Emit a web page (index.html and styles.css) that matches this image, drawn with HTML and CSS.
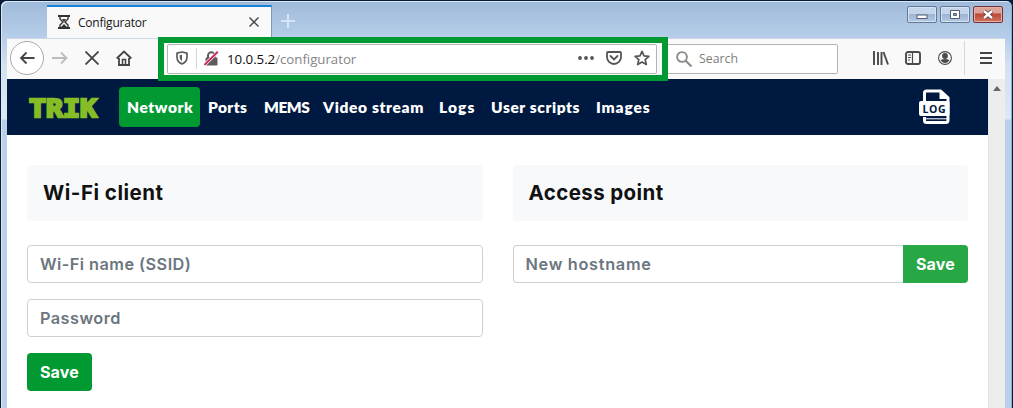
FILE: index.html
```html
<!DOCTYPE html>
<html lang="en">
<head>
<meta charset="utf-8">
<title>Configurator</title>
<link rel="stylesheet" href="styles.css">
</head>
<body>
<div class="window">
  <header class="titlebar">
    <div class="tab">
      <svg class="tab-icon" width="12" height="14" viewBox="0 0 12 14"><path d="M0 1h12M0 13h12" stroke="#333" stroke-width="2"/><path d="M2 2v2l3 3-3 3v2M10 2v2L7 7l3 3v2" fill="none" stroke="#333" stroke-width="1.4"/><path d="M4 4h4L6 7zM3 12l3-3 3 3z" fill="#333"/></svg>
      <span class="tab-title">Configurator</span>
      <svg class="tab-close" width="10" height="10" viewBox="0 0 10 10"><path d="M.5 .5l9 9M9.500 .5l-9 9" stroke="#444" stroke-width="1.4"/></svg>
    </div>
    <svg class="new-tab" width="14" height="14" viewBox="0 0 14 14"><path d="M7 0v14M0 7h14" stroke="#e6eef8" stroke-width="1.6"/></svg>
    <div class="win-buttons">
      <span class="win-button"><svg width="30" height="17" viewBox="0 0 30 17"><rect x="10" y="9" width="10" height="3.5" fill="#fff" stroke="#555d70"/></svg></span>
      <span class="win-button"><svg width="30" height="17" viewBox="0 0 30 17"><path d="M10.500 4.500h9v8h-9z" fill="#fff" stroke="#555d70"/><path d="M13.500 7.500h3v2h-3z" fill="#8ea9cd" stroke="#555d70"/></svg></span>
      <span class="win-button win-close"><svg width="30" height="17" viewBox="0 0 30 17"><path d="M11 5l8 7M19 5l-8 7" stroke="#5a3540" stroke-width="4"/><path d="M11 5l8 7M19 5l-8 7" stroke="#fff" stroke-width="2.400"/></svg></span>
    </div>
  </header>

  <div class="toolbar">
    <div class="nav-icons">
      <span class="back"><svg width="16" height="14" viewBox="0 0 16 14"><path d="M15.500 7H2M7.500 1.500L2 7l5.500 5.500" fill="none" stroke="#444" stroke-width="1.8"/></svg></span>
      <svg class="forward" width="16" height="14" viewBox="0 0 16 14"><path d="M0 7h14M9 1.500L14.500 7 9 12.500" fill="none" stroke="#bbb" stroke-width="1.8"/></svg>
      <svg class="stop" width="14" height="14" viewBox="0 0 14 14"><path d="M.5 .5l13 13M13.500 .5l-13 13" stroke="#444" stroke-width="1.8"/></svg>
      <svg class="home" width="16" height="16" viewBox="0 0 16 16"><path d="M.7 8.500L8 1.500l7.300 7" fill="none" stroke="#444" stroke-width="1.8"/><path d="M3 8v7h10V8" fill="none" stroke="#444" stroke-width="1.800"/><path d="M6.500 15V9.500h3V15" fill="none" stroke="#444" stroke-width="1.500"/></svg>
    </div>
    <div class="highlight">
      <div class="urlbar">
        <svg class="shield" width="12" height="14" viewBox="0 0 12 14"><path d="M6 1L11 2.200V6c0 3.300-2 5.700-5 7-3-1.300-5-3.700-5-7V2.200z" fill="none" stroke="#5c5c5c" stroke-width="1.700" stroke-linejoin="round"/><path d="M6 3.700v6.500C4.300 8.900 3.600 7.500 3.600 6V4.300z" fill="#5c5c5c"/></svg>
        <span class="separator"></span>
        <svg class="lock" width="15" height="15" viewBox="0 0 15 15"><path d="M4 7V4.500a3.300 3.300 0 0 1 6.600 0V7" fill="none" stroke="#5c5c5c" stroke-width="2"/><rect x="1.500" y="6.500" width="12" height="8" rx="1" fill="#5c5c5c"/><path d="M.5 13.800L13.800 .8" stroke="#fff" stroke-width="3.200"/><path d="M.5 13.800L13.800 .8" stroke="#cc2956" stroke-width="2"/></svg>
        <span class="address"><span class="host">10.0.5.2</span>/configurator</span>
        <svg class="dots" width="16" height="4" viewBox="0 0 16 4"><g fill="#555"><circle cx="2" cy="2" r="1.900"/><circle cx="8" cy="2" r="1.900"/><circle cx="14" cy="2" r="1.900"/></g></svg>
        <svg class="pocket" width="16" height="14" viewBox="0 0 16 14"><path d="M2 1h12q1 0 1 1v4a7 7 0 0 1-14 0V2q0-1 1-1z" fill="none" stroke="#555" stroke-width="1.800"/><path d="M4.500 5L8 8.500 11.500 5" fill="none" stroke="#555" stroke-width="1.800" stroke-linecap="round"/></svg>
        <svg class="star" width="16" height="16" viewBox="0 0 16 16"><path d="M8 1.300l2 4.500 4.900.5-3.700 3.300 1.100 4.900L8 12l-4.300 2.500 1.100-4.900L1.100 6.300 6 5.800z" fill="none" stroke="#555" stroke-width="1.700" stroke-linejoin="round"/></svg>
      </div>
    </div>
    <div class="search">
      <svg width="16" height="16" viewBox="0 0 16 16"><circle cx="6" cy="6" r="4.900" fill="none" stroke="#8c8c8c" stroke-width="1.900"/><path d="M9.500 9.500L15.500 15.500" stroke="#8c8c8c" stroke-width="2.200"/></svg>
      <span>Search</span>
    </div>
    <div class="tools">
      <svg width="16" height="14" viewBox="0 0 16 14"><path d="M1 0v14M5 1v13M8.500 1v13M10.500 1l4.500 12.500" stroke="#4a4a4a" stroke-width="1.900" fill="none"/></svg>
      <svg width="16" height="14" viewBox="0 0 16 14"><rect x="1" y="1" width="14" height="12" rx="2" fill="none" stroke="#4a4a4a" stroke-width="1.900"/><path d="M7.500 1v12M3 4h3M3 6.500h3M3 9h2" stroke="#4a4a4a" stroke-width="1.200"/></svg>
      <svg class="account" width="14" height="14" viewBox="0 0 14 14"><circle cx="7" cy="7" r="6.400" fill="none" stroke="#4a4a4a" stroke-width="1.100"/><circle cx="7" cy="5" r="2.900" fill="#4a4a4a"/><path d="M2.500 9q4.500-2 9 0Q10 12 7 12T2.500 9z" fill="#4a4a4a"/></svg>
      <span class="tool-divider"></span>
      <svg class="menu" width="12" height="12" viewBox="0 0 12 12"><path d="M0 1h12M0 6h12M0 11h12" stroke="#444" stroke-width="2"/></svg>
    </div>
  </div>

  <div class="viewport">
    <div class="page">
      <nav class="navbar">
        <svg class="brand" width="72" height="36" viewBox="0 0 72 36"><text class="brand-text" x="2" y="27.500" textLength="68" lengthAdjust="spacingAndGlyphs">TRIK</text></svg>
        <div class="links">
          <a class="link active network">Network</a>
          <a class="link ports">Ports</a>
          <a class="link mems">MEMS</a>
          <a class="link video">Video stream</a>
          <a class="link logs">Logs</a>
          <a class="link scripts">User scripts</a>
          <a class="link images">Images</a>
        </div>
        <svg class="log-icon" width="32" height="36" viewBox="0 0 32 36"><path d="M5.500 12V4q0-2 2-2h14l7.500 7v22q0 2.500-2 2.500H7.500q-2 0-2-2V28" fill="none" stroke="#fff" stroke-width="3"/><path d="M20.500 2v8h9V8l-6-6z" fill="#fff"/><rect x="0" y="12" width="30.500" height="15" rx="2" fill="#fff"/><path d="M6 29.800h22" stroke="#fff" stroke-width="1"/><text class="log-text" x="3.500" y="23.800" textLength="23" lengthAdjust="spacing">LOG</text></svg>
      </nav>
      <main class="columns">
        <section class="column">
          <h2 class="heading wifi-heading">Wi-Fi client</h2>
          <div class="field ssid">Wi-Fi name (SSID)</div>
          <div class="field">Password</div>
          <button class="save">Save</button>
        </section>
        <section class="column">
          <h2 class="heading access-heading">Access point</h2>
          <div class="group">
            <div class="field host-field">New hostname</div>
            <button class="save save-host">Save</button>
          </div>
        </section>
      </main>
    </div>
    <div class="scrollbar"><svg width="8" height="5" viewBox="0 0 8 5"><path d="M0 5l4-5 4 5z" fill="#666"/></svg></div>
  </div>
</div>
</body>
</html>
```
FILE: styles.css
```css
* { box-sizing: border-box; }
body { margin: 0; height: 408px; overflow: hidden; background: #061c38; font-family: "Open Sans", sans-serif; }
svg { display: block; flex: none; }
.window { width: 1011px; height: 407px; margin: 1px 0 0 1px; padding: 0 7px 0 6px; border-radius: 6px 6px 0 0; background: linear-gradient(#9fbad9 0, #b6cee9 37px, #d4e1ef 65px, #dce8f3 118px, #b9d0e8 119px, #b9d0e8 100%); box-shadow: inset 1px 1px 0 #dce9f5, inset -1px 0 0 #7bb4dc; }
.titlebar { height: 37px; display: flex; align-items: flex-start; padding-left: 40px; }
.tab { width: 225px; height: 33px; margin-top: 4px; padding: 0 12px 1px 11px; display: flex; align-items: center; border-top: 2px solid #1682dd; border-right: 1px solid #8199b5; background: #f9f9fa; }
.tab-title { margin-left: 8px; flex: 1; font: 12px "Open Sans", sans-serif; letter-spacing: -.22px; color: #151515; }
.new-tab { margin: 13px 0 0 9px; }
.win-buttons { margin: 5px 2px 0 auto; display: flex; gap: 3px; }
.win-button { width: 30px; height: 17px; border: 1px solid #64789a; border-radius: 2px; background: linear-gradient(#c5d5e9 0 45%, #9bb3d2 46%, #b4cae4); box-shadow: inset 0 0 0 1px #d5e2f1; }
.win-button svg { margin: -1px; }
.win-close { border-color: #70333c; background: linear-gradient(#dfa299 0 40%, #bd4638 46%, #d2765d); box-shadow: inset 0 0 0 1px #e5b1a6; }
.toolbar { height: 41px; display: flex; align-items: center; background: #f9f9fa; border-top: 1px solid #cfd9e5; }
.nav-icons { width: 151px; padding: 0 0 2px 3px; display: flex; align-items: center; }
.back { width: 34px; height: 34px; display: flex; align-items: center; justify-content: center; border: 1px solid #aaa; border-radius: 50%; background: #fff; }
.forward { margin-left: 8px; }
.stop { margin-left: 17px; }
.home { margin-left: 17px; }
.highlight { width: 510px; height: 44px; flex: none; position: relative; z-index: 1; padding: 1px 5px 1px 3px; border: 6px solid #009932; background: #f9f9fa; }
.urlbar { height: 30px; display: flex; align-items: center; padding: 0 6px 2px 8px; border: 1px solid #b4b4b4; border-radius: 2px; background: #fff; }
.separator { width: 1px; height: 21px; margin-left: 8px; background: #d5d5d5; }
.lock { margin-left: 7px; }
.address { flex: 1; margin: 1px 0 0 8px; font-size: 13.300px; letter-spacing: -.04px; color: #858585; }
.host { color: #0c0c0d; }
.pocket { margin-left: 12px; }
.star { margin-left: 12px; }
.search { width: 170px; height: 30px; display: flex; align-items: center; gap: 7px; padding: 0 0 1px 8px; border: 1px solid #b4b4b4; border-left: 0; border-radius: 0 2px 2px 0; background: #fff; color: #7c7c7c; font-size: 12.300px; }
.tools { margin: 0 13px 2px auto; display: flex; align-items: center; gap: 16px; }
.account { margin-left: 1px; }
.tool-divider { width: 1px; height: 34px; margin-left: -4px; background: #d7d7d9; }
.menu { margin-left: -1px; }
.viewport { display: flex; height: 329px; }
.page { width: 981px; background: #fff; }
.scrollbar { flex: 1; display: flex; justify-content: center; padding-top: 7px; background: #ededee; border-left: 1px solid #e2e2e2; }
.navbar { height: 56px; display: flex; align-items: center; padding: 0 37px 0 20px; background: #001941; }
.brand-text { font: bold 25px "DejaVu Sans Mono", monospace; fill: #86bc25; stroke: #86bc25; stroke-width: 2.400px; }
.links { display: flex; height: 40px; margin-left: 20px; }
.link { height: 40px; padding: 0 8px; white-space: nowrap; border-radius: 4px; color: #fff; font: 800 15.500px/41px Lato, sans-serif; }
.active { background: #009932; }
.network { width: 81px; letter-spacing: .6px; }
.ports { width: 56px; letter-spacing: .4px; }
.mems { width: 59px; letter-spacing: -.5px; }
.video { width: 116px; letter-spacing: .65px; }
.logs { width: 52px; letter-spacing: 1.1px; }
.scripts { width: 105px; letter-spacing: .6px; }
.images { width: 70px; letter-spacing: .85px; }
.log-icon { margin-left: auto; }
.log-text { font: bold 10.500px "Open Sans", sans-serif; fill: #001941; }
.columns { display: flex; gap: 30px; padding: 30px 20px 0 20px; }
.column { flex: 1; }
.heading { height: 56px; margin: 0 0 24px; padding-left: 16px; border-radius: 3px; background: #f8f9fb; color: #111; font: 650 20.500px/56px Inter, sans-serif; }
.wifi-heading { letter-spacing: .5px; }
.access-heading { letter-spacing: .4px; }
.field { height: 38px; margin-bottom: 16px; padding-left: 12px; border: 1px solid #ccd0d5; border-radius: 4px; color: #6c757d; font: 600 16.300px/37px Inter, sans-serif; letter-spacing: .45px; }
.save { display: block; width: 65px; height: 38px; padding: 0; border: 0; border-radius: 4px; background: #009932; color: #fff; font: 700 16px/38px Inter, sans-serif; letter-spacing: .2px; }
.group { display: flex; }
.host-field { flex: 1; border-right: 0; border-radius: 4px 0 0 4px; letter-spacing: .7px; }
.save-host { background: #28a745; border-radius: 0 4px 4px 0; }
```
